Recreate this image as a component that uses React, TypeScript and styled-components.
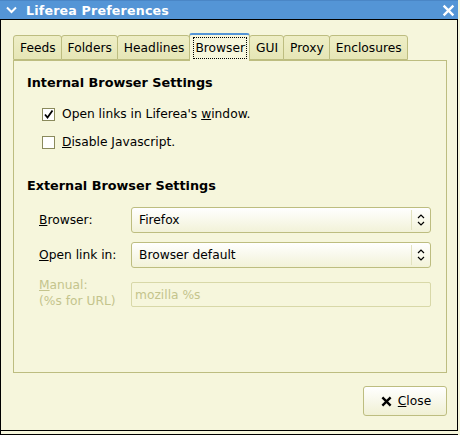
import styled, { createGlobalStyle } from 'styled-components';

const beige = '#f6f6dc';
const olive = '#bdbd80';
const tabOff = '#e6e6b6';
const blue = '#5495d6';
const faded = '#c4c48c';

const GlobalStyle = createGlobalStyle`
  html, body {
    margin: 0;
    padding: 0;
    background: ${beige};
  }
  body {
    font-family: 'DejaVu Sans', 'Liberation Sans', sans-serif;
    font-size: 12.25px;
    color: #000;
  }
`;

const Frame = styled.div`
  width: 458px;
  height: 435px;
  display: flex;
  flex-direction: column;
`;

const Window = styled.div`
  height: 431px;
  display: flex;
  flex-direction: column;
  box-sizing: border-box;
  border-bottom: 1px solid #000;
`;

const TitleBar = styled.div`
  height: 20px;
  box-sizing: border-box;
  background: ${blue};
  border-top: 1px solid #4a86c6;
  border-bottom: 1px solid #000;
  color: #fff;
  font-weight: bold;
  font-size: 12.6px;
  display: flex;
  align-items: center;
  padding: 0 3px 0 6px;
  gap: 9px;
`;

const TitleText = styled.span`
  flex: 1;
  letter-spacing: 0.2px;
`;

const Body = styled.div`
  flex: 1;
  display: flex;
  flex-direction: column;
  border-left: 1px solid #000;
  border-right: 1px solid #000;
  padding: 13px 10px 0 12px;
`;

const TabRow = styled.div`
  display: flex;
  align-items: flex-end;
  height: 27px;
`;

const Tab = styled.div<{ $active?: boolean }>`
  position: relative;
  box-sizing: border-box;
  height: ${p => (p.$active ? '28px' : '25px')};
  margin-bottom: ${p => (p.$active ? '-1px' : '0')};
  margin-left: -1px;
  padding: ${p => (p.$active ? '0 2px 0 3px' : '0 5px 0 6px')};
  display: flex;
  align-items: center;
  border: 1px solid ${olive};
  border-top: ${p => (p.$active ? `2px solid ${blue}` : `1px solid ${olive}`)};
  border-bottom: ${p => (p.$active ? 'none' : `1px solid ${olive}`)};
  border-radius: 3px 3px 0 0;
  background: ${p => (p.$active ? beige : `linear-gradient(#eeeec6, ${tabOff})`)};
  z-index: ${p => (p.$active ? 2 : 1)};
  &:first-child {
    margin-left: 0;
  }
`;

const FocusLabel = styled.span`
  border: 1px dotted #000;
  padding: 2px 1px;
  line-height: 16px;
`;

const Panel = styled.div`
  height: 313px;
  box-sizing: border-box;
  border: 1px solid ${olive};
  padding: 0 14px 0 13px;
  display: flex;
  flex-direction: column;
`;

const Heading = styled.div<{ $top: number }>`
  font-weight: bold;
  font-size: 12.8px;
  line-height: 16px;
  margin-top: ${p => p.$top}px;
`;

const CheckList = styled.div`
  margin-top: 9px;
  padding-left: 15px;
`;

const CheckRow = styled.label`
  height: 28px;
  display: flex;
  align-items: center;
  gap: 7px;
`;

const Box = styled.span`
  width: 13px;
  height: 13px;
  box-sizing: border-box;
  border: 1px solid #8a8a5c;
  background: #fff;
  display: flex;
  align-items: center;
  justify-content: center;
`;

const Form = styled.div`
  margin-top: 13px;
  padding-left: 12px;
  display: grid;
  grid-template-columns: 92px 300px;
  row-gap: 9px;
  align-items: center;
`;

const FieldLabel = styled.div<{ $disabled?: boolean }>`
  color: ${p => (p.$disabled ? faded : '#000')};
  line-height: 16px;
`;

const Combo = styled.div`
  height: 26px;
  box-sizing: border-box;
  border: 1px solid ${olive};
  border-radius: 3px;
  background: linear-gradient(#ffffff, #f2f2d8);
  display: flex;
  align-items: center;
`;

const ComboText = styled.span`
  flex: 1;
  padding-left: 7px;
`;

const ComboArrow = styled.span`
  width: 18px;
  height: 20px;
  border-left: 1px solid #e2e2c0;
  display: flex;
  align-items: center;
  justify-content: center;
`;

const Entry = styled.div`
  height: 25px;
  margin-top: 3px;
  box-sizing: border-box;
  border: 1px solid #d8d8a8;
  border-radius: 2px;
  background: ${beige};
  color: ${faded};
  display: flex;
  align-items: center;
  padding-left: 3px;
`;

const Footer = styled.div`
  display: flex;
  justify-content: flex-end;
  padding-top: 13px;
`;

const Button = styled.button`
  width: 84px;
  height: 30px;
  border: 1px solid ${olive};
  border-radius: 3px;
  background: linear-gradient(#ffffff, #f0f0d4);
  font: inherit;
  color: #000;
  display: flex;
  align-items: center;
  justify-content: center;
  gap: 6px;
  padding: 0 0 0 2px;
`;

const BottomEdge = styled.div`
  height: 3px;
  border-left: 1px solid #000;
  border-bottom: 1px solid #000;
`;

const Chevron = () => (
  <svg width="11" height="8" viewBox="0 0 11 8">
    <path d="M1 1.5 L5.5 6 L10 1.5" stroke="#fff" strokeWidth="2" fill="none" />
  </svg>
);

const CloseX = ({ color, size, w }: { color: string; size: number; w: number }) => (
  <svg width={size} height={size} viewBox="0 0 12 12">
    <path d="M1.5 1.5 L10.5 10.5 M10.5 1.5 L1.5 10.5" stroke={color} strokeWidth={w} fill="none" />
  </svg>
);

const Tick = () => (
  <svg width="11" height="11" viewBox="0 0 11 11">
    <path d="M2 5.5 L4.5 8.5 L9.5 1.5" stroke="#000" strokeWidth="1.8" fill="none" />
  </svg>
);

const Updown = () => (
  <svg width="8" height="14" viewBox="0 0 8 14">
    <path d="M1 5 L4 2 L7 5 M1 9 L4 12 L7 9" stroke="#000" strokeWidth="1.2" fill="none" />
  </svg>
);

const tabs = ['Feeds', 'Folders', 'Headlines', 'Browser', 'GUI', 'Proxy', 'Enclosures'];

export default function App() {
  return (
    <>
      <GlobalStyle />
      <Frame>
        <Window>
          <TitleBar>
            <Chevron />
            <TitleText>Liferea Preferences</TitleText>
            <CloseX color="#fff" size={13} w={2.2} />
          </TitleBar>
          <Body>
            <TabRow>
              {tabs.map(t =>
                t === 'Browser' ? (
                  <Tab key={t} $active>
                    <FocusLabel>{t}</FocusLabel>
                  </Tab>
                ) : (
                  <Tab key={t}>{t}</Tab>
                )
              )}
            </TabRow>
            <Panel>
              <Heading $top={14}>Internal Browser Settings</Heading>
              <CheckList>
                <CheckRow>
                  <Box>
                    <Tick />
                  </Box>
                  <span>
                    Open links in Liferea's <u>w</u>indow.
                  </span>
                </CheckRow>
                <CheckRow>
                  <Box />
                  <span>
                    <u>D</u>isable Javascript.
                  </span>
                </CheckRow>
              </CheckList>
              <Heading $top={22}>External Browser Settings</Heading>
              <Form>
                <FieldLabel>
                  <u>B</u>rowser:
                </FieldLabel>
                <Combo>
                  <ComboText>Firefox</ComboText>
                  <ComboArrow>
                    <Updown />
                  </ComboArrow>
                </Combo>
                <FieldLabel>
                  <u>O</u>pen link in:
                </FieldLabel>
                <Combo>
                  <ComboText>Browser default</ComboText>
                  <ComboArrow>
                    <Updown />
                  </ComboArrow>
                </Combo>
                <FieldLabel $disabled>
                  <u>M</u>anual:
                  <br />
                  (%s for URL)
                </FieldLabel>
                <Entry>mozilla %s</Entry>
              </Form>
            </Panel>
            <Footer>
              <Button>
                <CloseX color="#000" size={11} w={2.6} />
                <span>
                  <u>C</u>lose
                </span>
              </Button>
            </Footer>
          </Body>
        </Window>
        <BottomEdge />
      </Frame>
    </>
  );
}
